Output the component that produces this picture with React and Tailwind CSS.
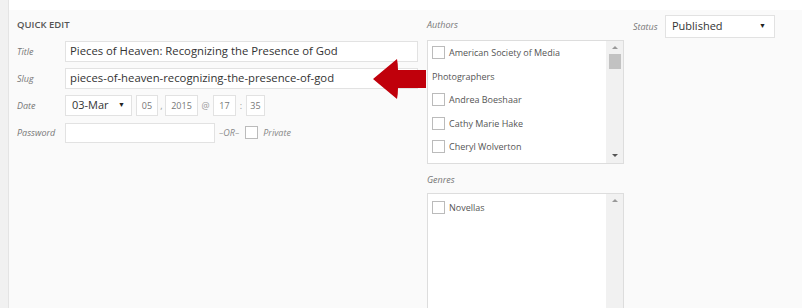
import React from "react";

const Check = () => (
  <span className="inline-block w-[13px] h-[13px] border border-[#bbb] bg-white align-middle mr-[4px] -mt-[2px]" />
);

const Row = ({ label, children }) => (
  <div className="flex items-center h-[21px] mb-[6px]">
    <div className="w-[48px] text-[9px] italic text-[#777]">{label}</div>
    {children}
  </div>
);

const SmallBox = ({ w, children }) => (
  <div className={`h-[21px] ${w} border border-[#e2e2e2] bg-white text-[9px] text-[#777] flex items-center justify-center`}>
    {children}
  </div>
);

const Scrollbar = ({ thumb }) => (
  <div className="w-[17px] bg-[#f1f1f1] flex flex-col items-center pt-[5px]">
    <div className="w-0 h-0 border-l-[3px] border-r-[3px] border-b-[3px] border-l-transparent border-r-transparent border-b-[#999]" />
    {thumb && <div className="mt-[5px] w-[12px] h-[15px] bg-[#c2c2c2]" />}
    {thumb && <div className="flex-1" />}
    {thumb && (
      <div className="mb-[6px] w-0 h-0 border-l-[3px] border-r-[3px] border-t-[3px] border-l-transparent border-r-transparent border-t-[#555]" />
    )}
  </div>
);

export default function App() {
  const authors = ["Andrea Boeshaar", "Cathy Marie Hake", "Cheryl Wolverton"];
  return (
    <div className="relative flex h-[308px] w-[802px] overflow-hidden bg-white" style={{ fontFamily: "'Open Sans', sans-serif" }}>
      <div className="w-[9px] h-full shrink-0 bg-[#f1f1f1] border-r border-[#e4e4e4]" />
      <div className="flex-1 flex flex-col min-h-0">
        <div className="h-[10px] shrink-0 bg-white" />
        <div className="flex-1 min-h-0 overflow-hidden bg-[#fafafa] flex pl-[8px]">
          {/* left column */}
          <div className="w-[402px] shrink-0">
            <div className="h-[31px] pt-[10px] text-[9.5px] font-semibold uppercase text-[#555] leading-[10px]">Quick Edit</div>
            <Row label="Title">
              <div className="h-[21px] w-[353px] border border-[#e2e2e2] bg-white px-[4px] text-[11.3px] text-[#333] flex items-center">
                Pieces of Heaven: Recognizing the Presence of God
              </div>
            </Row>
            <Row label="Slug">
              <div className="h-[21px] w-[353px] border border-[#e2e2e2] bg-white px-[4px] text-[11.3px] text-[#333] flex items-center">
                pieces-of-heaven-recognizing-the-presence-of-god
              </div>
            </Row>
            <Row label="Date">
              <div className="h-[21px] w-[67px] border border-[#e2e2e2] bg-white pl-[6px] pr-[6px] text-[11px] text-[#333] flex items-center justify-between">
                <span>03-Mar</span>
                <span className="text-[7px] text-[#222]">▼</span>
              </div>
              <div className="ml-[4px]" />
              <SmallBox w="w-[22px]">05</SmallBox>
              <span className="w-[7px] text-center text-[9px] text-[#999]">,</span>
              <SmallBox w="w-[33px]">2015</SmallBox>
              <span className="w-[15px] text-center text-[9px] text-[#999]">@</span>
              <SmallBox w="w-[23px]">17</SmallBox>
              <span className="w-[10px] text-center text-[9px] text-[#999]">:</span>
              <SmallBox w="w-[19px]">35</SmallBox>
            </Row>
            <Row label="Password">
              <div className="h-[20px] w-[150px] border border-[#e2e2e2] bg-white" />
              <span className="ml-[4px] text-[9px] italic text-[#888]">–OR–</span>
              <span className="ml-[6px] inline-block w-[13px] h-[13px] border border-[#bbb] bg-white" />
              <span className="ml-[5px] text-[9px] italic text-[#888]">Private</span>
            </Row>
          </div>

          {/* middle column */}
          <div className="w-[197px] shrink-0 ml-[8px]">
            <div className="h-[30px] pt-[9px] text-[9px] italic text-[#777] leading-[12px]">Authors</div>
            <div className="h-[124px] border border-[#ddd] bg-white flex">
              <div className="flex-1 pl-[4px] text-[9px] text-[#555] leading-[23.5px]">
                <div>
                  <Check />American Society of Media
                  <br />
                  Photographers
                </div>
                {authors.map((a) => (
                  <div key={a}>
                    <Check />
                    {a}
                  </div>
                ))}
              </div>
              <Scrollbar thumb />
            </div>
            <div className="h-[29px] pt-[10px] text-[9px] italic text-[#777] leading-[12px]">Genres</div>
            <div className="h-[130px] border border-[#ddd] bg-white flex">
              <div className="flex-1 pl-[4px] pt-[2px] text-[9px] text-[#555] leading-[23.5px]">
                <div>
                  <Check />
                  Novellas
                </div>
              </div>
              <Scrollbar />
            </div>
          </div>

          {/* right column */}
          <div className="ml-[9px] pt-[5px] flex items-start">
            <div className="w-[32px] h-[23px] flex items-center text-[9px] italic text-[#777]">Status</div>
            <div className="h-[23px] w-[110px] border border-[#e2e2e2] bg-white pl-[6px] pr-[8px] text-[11px] text-[#333] flex items-center justify-between">
              <span>Published</span>
              <span className="text-[7px] text-[#222]">▼</span>
            </div>
          </div>
        </div>
      </div>

      {/* red arrow overlay */}
      <svg className="absolute left-[372px] top-[58px]" width="56" height="42" viewBox="0 0 56 42">
        <path d="M1 21 L25 1 Q26 6 26 12 L54 12 L54 30 L26 30 Q26 36 25 41 Z" fill="#c0000b" />
      </svg>
    </div>
  );
}
